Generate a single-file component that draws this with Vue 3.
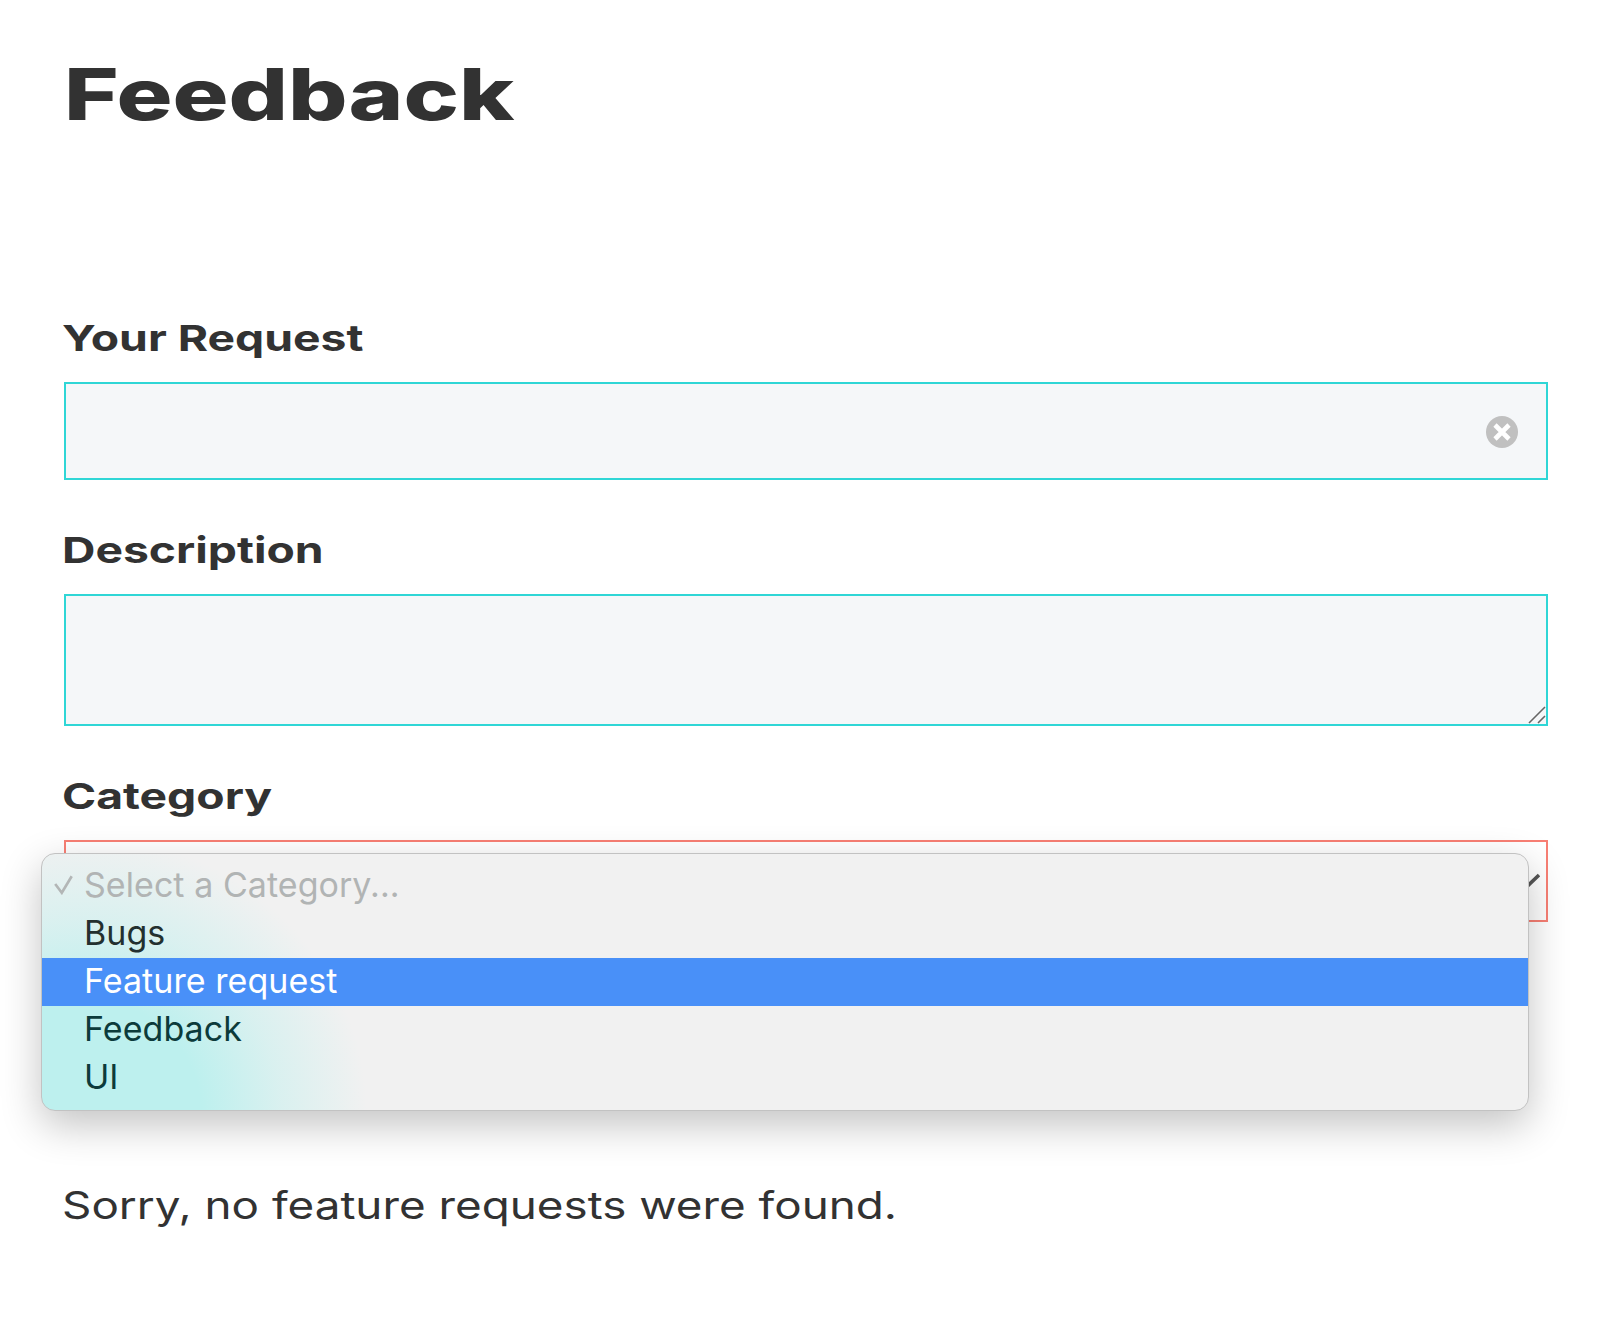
<script setup>
const options = [
  { label: "Select a Category...", cls: "placeholder", checked: true },
  { label: "Bugs", cls: "bugs" },
  { label: "Feature request", cls: "active" },
  { label: "Feedback", cls: "teal" },
  { label: "UI", cls: "teal" }
];
</script>

<template>
  <div class="page">
    <h1 class="title"><span>Feedback</span></h1>

    <form class="form" @submit.prevent>
      <div class="field first">
        <label class="label"><span>Your Request</span></label>
        <div class="input-wrap">
          <input class="control input" type="text" />
          <svg class="clear" viewBox="0 0 32 32" width="32" height="32">
            <circle cx="16" cy="16" r="16" fill="#c0c0c0" />
            <path d="M9 9l14 14M23 9L9 23" stroke="#fff" stroke-width="4.6" />
          </svg>
        </div>
      </div>

      <div class="field">
        <label class="label"><span>Description</span></label>
        <div class="input-wrap">
          <textarea class="control textarea"></textarea>
          <svg class="grip" viewBox="0 0 18 18" width="18" height="18">
            <path d="M1 17L17 1M10 17l7-7" fill="none" stroke="#666" stroke-width="1.6" />
          </svg>
        </div>
      </div>

      <div class="field">
        <label class="label"><span>Category</span></label>
        <div class="select-wrap">
          <div class="select">
            <svg class="arrow" viewBox="0 0 14 14" width="14" height="14">
              <path d="M0 9l3 2.5L13 2" fill="none" stroke="#555" stroke-width="3.6" />
            </svg>
          </div>
          <ul class="menu">
            <li v-for="opt in options" :key="opt.label" :class="['option', opt.cls]">
              <svg v-if="opt.checked" class="check" viewBox="0 0 20 20" width="22" height="22">
                <path d="M2 10l6 8L17 3" fill="none" stroke="#b3b6b6" stroke-width="2.4" />
              </svg>
              {{ opt.label }}
            </li>
          </ul>
        </div>
      </div>
    </form>

    <p class="empty"><span>Sorry, no feature requests were found.</span></p>
  </div>
</template>

<style scoped>
.page {
  width: 1604px;
  height: 1334px;
  padding: 0 56px 0 64px;
  box-sizing: border-box;
  color: #323232;
  font-family: Inter, "Liberation Sans", sans-serif;
  overflow: hidden;
}

.title {
  margin: 0;
  padding-top: 52px;
  font-size: 71px;
  line-height: 84px;
  font-weight: 800;
}

.title span,
.label span,
.empty span {
  display: inline-block;
  white-space: nowrap;
  transform-origin: left center;
}

.title span {
  transform: scaleX(1.315);
}

.form {
  display: flex;
  flex-direction: column;
}

.field {
  margin-top: 50px;
}

.field.first {
  margin-top: 182px;
}

.label {
  display: block;
  font-size: 36px;
  line-height: 40px;
  font-weight: 700;
  margin-bottom: 24px;
  margin-left: -2px;
}

.label span {
  transform: scaleX(1.285);
}

.input-wrap {
  position: relative;
}

.control {
  display: block;
  width: 100%;
  box-sizing: border-box;
  background: #f5f7f9;
  border: 2px solid #2fd6d6;
  border-radius: 0;
  outline: none;
  margin: 0;
}

.input {
  height: 98px;
}

.textarea {
  height: 132px;
  resize: none;
}

.clear {
  position: absolute;
  right: 30px;
  top: 34px;
}

.grip {
  position: absolute;
  right: 2px;
  bottom: 2px;
}

.select-wrap {
  position: relative;
}

.select {
  height: 82px;
  box-sizing: border-box;
  border: 2px solid #f87f74;
  background: #fff;
  position: relative;
}

.arrow {
  position: absolute;
  right: 6px;
  top: 31px;
}

.menu {
  position: absolute;
  left: -23px;
  top: 13px;
  width: 1488px;
  height: 258px;
  box-sizing: border-box;
  margin: 0;
  padding: 8px 0;
  list-style: none;
  border-radius: 14px;
  border: 1px solid #c2c2c2;
  overflow: hidden;
  background:
    radial-gradient(ellipse 285px 280px at 40px 262px, #bdf0ee 0%, #bdf0ee 42%, rgba(189, 240, 238, 0.45) 70%, rgba(189, 240, 238, 0) 100%),
    #f1f1f1;
  box-shadow: 0 14px 40px rgba(0, 0, 0, 0.24);
}

.option {
  height: 48px;
  line-height: 46px;
  padding-left: 42px;
  font-size: 34px;
  letter-spacing: 0.05px;
  color: #23302f;
  position: relative;
  white-space: nowrap;
}

.check {
  position: absolute;
  left: 11px;
  top: 11px;
}

.placeholder {
  color: #b1b4b4;
}

.active {
  background: #4990f8;
  color: #fff;
}

.teal {
  color: #0c3b3b;
}

.empty {
  margin: 260px 0 0;
  margin-left: -2px;
  font-size: 38px;
  line-height: 46px;
}

.empty span {
  transform: scaleX(1.205);
}
</style>
